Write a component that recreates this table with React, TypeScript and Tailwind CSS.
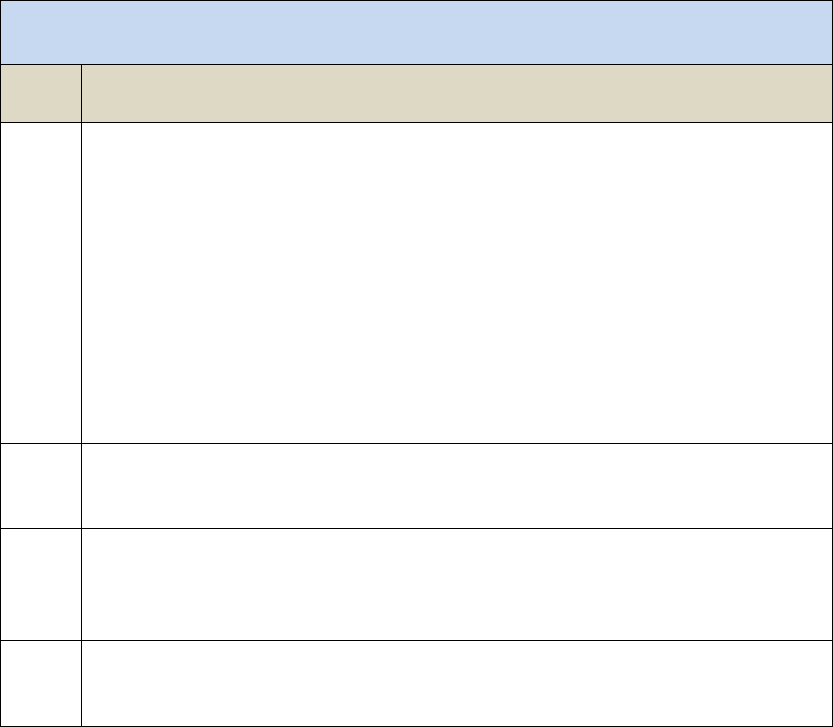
export default function App() {
  const rows = [
    { h: 'h-[58px]', bg: 'bg-[#ddd9c4]' },
    { h: 'h-[321px]', bg: 'bg-white' },
    { h: 'h-[85px]', bg: 'bg-white' },
    { h: 'h-[112px]', bg: 'bg-white' },
    { h: 'h-[86px]', bg: 'bg-white' },
  ];

  return (
    <main className="min-h-screen bg-white">
      <div className="w-[833px] border border-black flex flex-col">
        {/* Title row */}
        <div className="h-[63px] bg-[#c6d9f1]" />

        {rows.map((row, i) => (
          <div key={i} className={`flex border-t border-black ${row.h} ${row.bg}`}>
            <div className="w-[81px] shrink-0 border-r border-black" />
            <div className="flex-1" />
          </div>
        ))}
      </div>
    </main>
  );
}
